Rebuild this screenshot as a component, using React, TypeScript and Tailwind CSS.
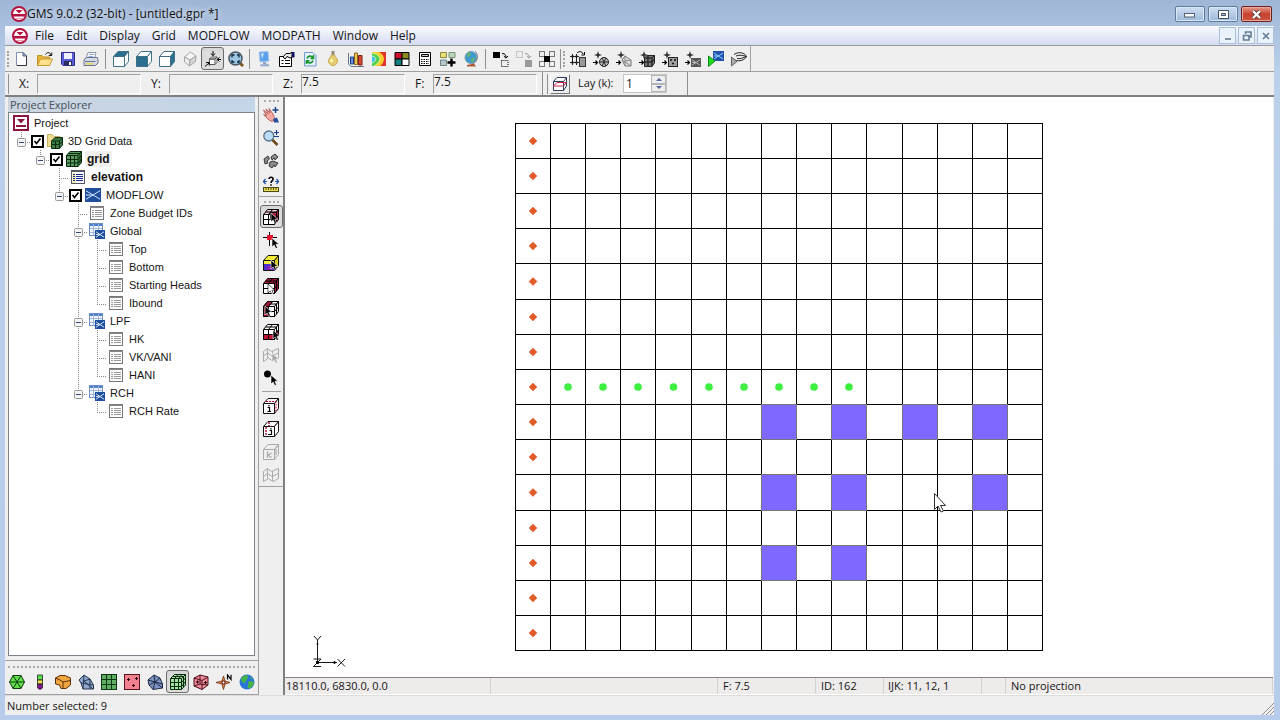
import React, { useState } from 'react';

interface IconProps {
  children: React.ReactNode;
  size?: number;
}

const Svg: React.FC<IconProps> = ({ children, size = 16 }) => (
  <svg width={size} height={size} viewBox="0 0 16 16" fill="none" className="shrink-0" aria-hidden="true">
    {children}
  </svg>
);

/* ---------- shared shapes ---------- */

const Cube = ({ top = '#fff', front = '#fff', side = '#fff', line = '#3f7189' }) => (
  <g stroke={line} strokeLinejoin="round">
    <path d="M.5 5.500L5 .5H15.500L11.500 5.500Z" fill={top} />
    <path d="M.5 5.500H11.500V15.500H.5Z" fill={front} />
    <path d="M11.500 5.500L15.500 .5V10.500L11.500 15.500Z" fill={side} />
  </g>
);

const GridCube = ({ front = '#fff', top = '#fff', side = '#fff', line = '#000' }) => (
  <g stroke={line}>
    <path d="M.5 5.500L4.500 .5H15.500L11.500 5.500Z" fill={top} />
    <path d="M.5 5.500H11.500V15.500H.5Z" fill={front} />
    <path d="M11.500 5.500L15.500 .5V10.500L11.500 15.500Z" fill={side} />
    <path d="M5.500 5.500V15.500M.5 10.500H11.500M11.500 10.500L15.500 6M5.500 5.500L9.500 .5M2.500 3H13.500V13" />
  </g>
);

const Pointer = ({ x = 7, y = 5, fill = '#000', line = '#fff' }) => (
  <path
    d={`M${x} ${y}v9l2.200-2 1.600 3.500 1.700-.8-1.600-3.400h3z`}
    fill={fill}
    stroke={line}
    strokeWidth=".6"
  />
);

const Sparkle = () => (
  <g>
    <path d="M5 0L6 3L9 4L6 5L5 8L4 5L1 4L4 3Z" fill="#333" />
    <path d="M0 11.500H4M2.500 9.500L4.500 11.500L2.500 13.500" stroke="#000" strokeWidth="1.200" />
  </g>
);

const Flow = ({ x = 0, y = 0, w = 16, h = 16, bg = '#1f4e9c', fg = '#cfe3ff' }) => (
  <g>
    <rect x={x} y={y} width={w} height={h} fill={bg} />
    <path
      d={`M${x + 1} ${y + h * 0.2}L${x + w * 0.5} ${y + h * 0.5}L${x + w - 1} ${y + h * 0.2}M${x + 1} ${y + h * 0.5}H${x + w * 0.5}M${x + 1} ${y + h * 0.8}L${x + w * 0.5} ${y + h * 0.5}L${x + w - 1} ${y + h * 0.8}`}
      stroke={fg}
    />
  </g>
);

const Logo = ({ size = 16 }) => (
  <Svg size={size}>
    <circle cx="8" cy="8" r="7" fill="#fff" stroke="#b3123f" strokeWidth="2" />
    <path d="M2 8H14V10.500H2Z" fill="#b3123f" />
    <path d="M4.500 4H11.500L8 7.600Z" fill="#b3123f" />
    <path d="M3.500 12.500H12.500" stroke="#e8a0b4" />
  </Svg>
);

/* ---------- icons ---------- */

const icons: Record<string, React.ReactNode> = {
  new: (
    <g>
      <path d="M2.500 1.500H9L12.500 5V14.500H2.500Z" fill="#fdfdff" stroke="#7f90b5" />
      <path d="M9 1.500V5H12.500Z" fill="#b9c8e6" stroke="#4f5f86" />
      <path d="M12.500 5V14.500H3" stroke="#334" />
    </g>
  ),
  open: (
    <g>
      <path d="M.5 4.500H5L6.500 6H12.500V14.500H.5Z" fill="#e8b53c" stroke="#c08f25" />
      <path d="M3.500 8H15.500L12.500 14.500H.5Z" fill="#ffe08a" stroke="#c99a30" />
      <path d="M8.500 3.500C10 .8 13 1 14 4M14.800 1.500V4.500H11.800" stroke="#111" />
    </g>
  ),
  save: (
    <g>
      <path d="M1.500 1.500H14.500V14.500H3L1.500 13Z" fill="#5a5bd0" stroke="#30308c" />
      <rect x="4" y="2" width="8" height="6" fill="#eef0ff" />
      <rect x="4" y="10" width="8" height="4.500" fill="#2b2b66" />
      <rect x="9" y="11" width="2" height="3" fill="#fff" />
    </g>
  ),
  print: (
    <g>
      <path d="M5 1.500H13L11.500 7.500H3Z" fill="#fff" stroke="#8a93a8" />
      <path d="M1 8.500L3.500 6.500H14.500L15 9V12L12.500 14.500H1Z" fill="#d3d8e6" stroke="#6b7390" />
      <path d="M2 10.500H12.500" stroke="#6b7390" />
      <path d="M3 12.800H10" stroke="#e8d84a" strokeWidth="1.500" />
      <path d="M6 3.500H11M5.500 5.500H10" stroke="#8ea7d8" />
    </g>
  ),
  top: <Cube top="#2b6f8e" />,
  front: <Cube front="#2b6f8e" />,
  side: <Cube side="#2b6f8e" />,
  oblique: (
    <g stroke="#a5a5a5" fill="#f7f7f7">
      <path d="M8.500 1L14 5L8 9L2.500 6Z" />
      <path d="M2.500 6L8 9L7.500 15L2.500 11Z" fill="#ececec" />
      <path d="M14 5L13.500 10.500L7.500 15L8 9Z" fill="#d5d5d5" />
    </g>
  ),
  frame: (
    <g stroke="#000">
      <path d="M4.500 8L6.500 6H12L10 8ZM4.500 8H10V13.500H4.500ZM10 8L12 6V11.500L10 13.500" fill="#fff" stroke="#555" />
      <path d="M8 0V4M6 2.500L8 4.800L10 2.500M16 8.500H12.500M14.500 6.500L12.300 8.500L14.500 10.500M0 15.500L4 12M1 11.500H4.200V14.500" />
    </g>
  ),
  zoomExtents: (
    <g>
      <path d="M11.500 11.500L15 15" stroke="#7a5a20" strokeWidth="3" />
      <circle cx="7.500" cy="7.500" r="6.500" fill="#9cc6e4" stroke="#4a5a64" strokeWidth="1.500" />
      <path d="M4 6.500V4H6.500M9 4H11V6.500M11 9V11H9M6.500 11H4V9" stroke="#102838" strokeWidth="1.300" />
    </g>
  ),
  monitor: (
    <g>
      <path d="M3 1L12 .5L13 10L4 11Z" fill="#5aa0e8" stroke="#a9c7e8" />
      <path d="M5 2.500L8 2.300L6 8Z" fill="#c9e6ff" />
      <path d="M7 11H10V13H7Z" fill="#89a5c8" />
      <path d="M4 14L12 13L13 15H5Z" fill="#9db2cf" stroke="#8aa0c0" strokeWidth=".6" />
    </g>
  ),
  properties: (
    <g>
      <path d="M.5 5.500H12.500V15.500H.5Z" fill="#fff" stroke="#000" />
      <path d="M2.500 9.500H4.500M6 9.500H11M2.500 12.500H4.500M6 12.500H11" stroke="#000" />
      <path d="M4 6L7 2.500H11L13 1V6L11 7L8 5.500L6 8Z" fill="#e8e8e8" stroke="#000" />
      <path d="M13 1H15.500V6.500H13Z" fill="#10106a" />
    </g>
  ),
  refresh: (
    <g>
      <path d="M2.500 1.500H11L14 4.500V15H2.500Z" fill="#e4f2ff" stroke="#6f9bd1" />
      <path d="M5 7.500C6 4.500 9.500 4.500 10.500 6.500M11.500 4V7.500H8.500M11 9.500C10 12.500 6.500 12.500 5.500 10.500M4.500 13V9.800H7.500" stroke="#17952b" strokeWidth="1.600" />
    </g>
  ),
  bulb: (
    <g>
      <rect x="6.500" y="0" width="3" height="5" fill="#8b8b7a" />
      <path d="M6.500 4H9.500C10 6 12.500 7 12.500 10C12.500 12.500 10.500 14.500 8 14.500C5.500 14.500 3.500 12.500 3.500 10C3.500 7 6 6 6.500 4Z" fill="#e6cd72" stroke="#c4a952" />
      <circle cx="6.500" cy="9.500" r="1.600" fill="#fff4bd" />
    </g>
  ),
  chart: (
    <g>
      <path d="M.5 2V13L3 15.500H16" stroke="#678" />
      <path d="M2.500 6H5.500V13H2.500Z" fill="#6d8fe0" stroke="#1e3a86" />
      <path d="M6.500 2H9.500V13.500H6.500Z" fill="#e9c553" stroke="#8a6a18" />
      <path d="M10.500 4.500H14V14H10.500Z" fill="#d94a36" stroke="#7d1d12" />
    </g>
  ),
  contour: (
    <g>
      <rect x="1" y="1" width="14" height="14" fill="#e3342a" />
      <path d="M1 1H8C15 5 14 11 9 15H1Z" fill="#f5cf2d" />
      <path d="M1 2C11 4 11 10 3 15H1Z" fill="#4fd24b" />
      <path d="M1 5C6 6 6 10 1 12Z" fill="#3fc4ec" />
      <path d="M1 2C11 4 11 10 3 15M1 5C6 6 6 10 1 12" stroke="#f6f6c8" strokeWidth=".7" />
    </g>
  ),
  palette: (
    <g stroke="#000">
      <path d="M1 1.500H8V8H1Z" fill="#d01030" />
      <path d="M8 1.500H15V8H8Z" fill="#8c8c1e" />
      <path d="M1 8H8V14.500H1Z" fill="#108080" />
      <path d="M8 8H15V14.500H8Z" fill="#fff" />
    </g>
  ),
  calculator: (
    <g>
      <path d="M2.500 1.500H13.500V14.500H2.500Z" fill="#fff" stroke="#000" />
      <path d="M4.500 3.500H11.500V5.500H4.500Z" fill="#ccc" stroke="#000" />
      <path d="M4 8.500H12M4 10.500H12M4 12.500H12" stroke="#000" strokeDasharray="1.500 1" />
    </g>
  ),
  gridPlus: (
    <g>
      <path d="M.5 1.500H6.500V6.500H.5Z" fill="#eae071" stroke="#8b8643" />
      <path d="M9 1.500H15V6.500H9Z" fill="#bcd8bb" stroke="#779477" />
      <path d="M.5 9H6.500V14.500H.5Z" fill="#b9c8c9" stroke="#6d8080" />
      <path d="M11.500 7.500V15.500M7.500 11.500H15.500" stroke="#000" strokeWidth="2.400" />
    </g>
  ),
  globe: (
    <g>
      <circle cx="8" cy="6.500" r="6" fill="#3e9bd0" stroke="#7d9cb0" />
      <path d="M4 3C7 0 9 3 7 5C6 7 4 6 4 3ZM8 8L12 6L11 10L8.500 11Z" fill="#63b66a" />
      <path d="M12 0C16 4 15 10 10 13" stroke="#888" />
      <path d="M4 14L11 12.500L13 15.500H4Z" fill="#b05a30" />
    </g>
  ),
  moveSelection: (
    <g>
      <rect x="0" y="1" width="7" height="6" fill="#000" />
      <path d="M9 2.500C12 2.500 13 4 13 6.500M10.800 5L13 7.200L15 5" stroke="#000" />
      <rect x="8.500" y="9.500" width="6.500" height="6" stroke="#000" strokeDasharray="1 1" />
    </g>
  ),
  moveSelectionOff: (
    <g>
      <rect x=".5" y=".5" width="6" height="6" stroke="#999" strokeDasharray="1 1" />
      <path d="M9 2.500C12 2.500 13 4 13 6.500M10.800 5L13 7.200L15 5" stroke="#999" />
      <rect x="9" y="9" width="7" height="7" fill="#999" />
    </g>
  ),
  selectAll: (
    <g>
      <path d="M.5 .5H5.500V5.500H.5ZM10.500 .5H15.500V5.500H10.500ZM.5 10.500H5.500V15.500H.5ZM10.500 10.500H15.500V15.500H10.500Z" stroke="#000" strokeDasharray="1 1" />
      <rect x="5" y="5" width="6" height="6" fill="#000" />
    </g>
  ),
  mapTo: (
    <g>
      <path d="M2.500 3V14M6.500 3V14M0 5.500H9M0 11.500H9" stroke="#222" />
      <path d="M1.500 4.500H3.500V6.500H1.500ZM5.500 4.500H7.500V6.500H5.500ZM1.500 10.500H3.500V12.500H1.500ZM5.500 10.500H7.500V12.500H5.500Z" fill="#222" />
      <path d="M7 2C9 0 12 0 13 3M14.500 1V4H11.500" stroke="#000" />
      <rect x="9.500" y="6.500" width="6" height="9" fill="#999" stroke="#333" />
    </g>
  ),
  to2d: (
    <g>
      <Sparkle />
      <circle cx="11" cy="11" r="4.500" fill="#bbb" stroke="#222" />
      <path d="M6.500 11H15.500M9 7L13 15M13 7L9 15" stroke="#222" />
    </g>
  ),
  toTin: (
    <g>
      <Sparkle />
      <path d="M6 9L9 5L15 9V15H9Z" fill="#ddd" stroke="#777" />
      <path d="M9 5V15M6 9L15 15M9 10L15 9" stroke="#888" />
    </g>
  ),
  toGrid3d: (
    <g>
      <Sparkle />
      <path d="M5.500 7L8 4.500H15.500V12L13 15.500H5.500Z" fill="#777" stroke="#222" />
      <path d="M5.500 7H13V15.500M13 7L15.500 4.500M9 5V15M5.500 11H13L15.500 8" stroke="#111" />
    </g>
  ),
  toScatter: (
    <g>
      <Sparkle />
      <rect x="6.500" y="6.500" width="9" height="9" fill="#9d9d9d" stroke="#222" />
      <path d="M8 9H10M12 9H14M10 12.500H12" stroke="#111" strokeWidth="1.500" />
    </g>
  ),
  toModflow: (
    <g>
      <Sparkle />
      <Flow x={6} y={7} w={10} h={9} bg="#555" fg="#bbb" />
    </g>
  ),
  runModflow: (
    <g>
      <Flow x={5} y={0} w={11} h={10} bg="#2052ad" fg="#8fd0ff" />
      <path d="M.5 5L7 10L.5 15.500Z" fill="#1fe01f" stroke="#0c8a16" />
    </g>
  ),
  runModpath: (
    <g>
      <path d="M3 3.500C8 0 14 2 15.500 5.500C14 9 8 11 4 9M5 5C9 3.500 12 4.500 15.500 5.500C12 7 9 8 6 7.500" stroke="#222" />
      <path d="M.5 6L6 10.500L.5 15Z" fill="#aaa" stroke="#666" />
    </g>
  ),
  layers: (
    <g stroke="#2b3f5c">
      <path d="M1.500 5.500L5 1.500H14.500V10L11.500 14.500H1.500Z" fill="#fff" />
      <path d="M1.500 5.500H11.500V14.500M11.500 5.500L14.500 1.500" />
      <path d="M1.500 10L5 6.500H14.500L11.500 10Z" stroke="#d02848" />
    </g>
  ),
  /* side tools */
  pan: (
    <g>
      <path d="M.5 3L5 7L3 2L7 6L6 1.500L10 7L11 9.500L12.500 12L9 14.500C5 13 3 10 .5 7.500L3.500 9Z" fill="#f5a9a0" stroke="#b8625a" />
      <path d="M10 12L14 10.500L16 15.500H11Z" fill="#2a4f9c" />
      <path d="M12.500 0V6M9.500 3H15.500" stroke="#1c3f8c" strokeWidth="1.500" />
    </g>
  ),
  zoom: (
    <g>
      <path d="M9 9.500L14.500 15" stroke="#6b4a20" strokeWidth="2.500" />
      <circle cx="5.800" cy="6" r="5" fill="#b7dcf3" stroke="#5b7488" strokeWidth="1.300" />
      <path d="M13.500 0V5M11 2.500H16M11 6.500H16" stroke="#1c3f8c" strokeWidth="1.200" />
    </g>
  ),
  rotate: (
    <g stroke="#3a3a3a" fill="#8a8a8a">
      <path d="M1 6L5 3L6.500 6L4 8L5 10L2 11Z" />
      <path d="M8 4L12 1L15 4L12 7L11 5L9 7Z" />
      <path d="M7 9L10 8L15 10L12 14L11 12L9 15L6 13Z" />
    </g>
  ),
  measure: (
    <g>
      <path d="M0 5.500H4M2.500 3L.3 5.500L2.500 8M16 5.500H12M13.500 3L15.700 5.500L13.500 8" stroke="#1c4fa0" strokeWidth="1.200" />
      <path d="M6 3C6 .5 10.500 .5 10 3.500C9.800 5 8 5 8 7M8 8.300V9.800" stroke="#000" strokeWidth="1.600" />
      <rect x=".5" y="11.500" width="15" height="4" fill="#e9e04c" stroke="#4c4a14" />
      <path d="M3 12V14M5.500 12V14M8 12V14M10.500 12V14M13 12V14" stroke="#4c4a14" />
    </g>
  ),
  selCells: (
    <g>
      <GridCube top="#f1c4cf" side="#a01838" />
      <path d="M7.500 3.500H13.500V9.500H7.500Z" fill="#b02040" stroke="#000" />
      <Pointer x={8} y={4} />
    </g>
  ),
  selNode: (
    <g>
      <path d="M6.500 0V14M0 5.500H14" stroke="#000" />
      <rect x="4" y="3" width="6" height="5" fill="#e0142c" />
      <Pointer x={9} y={6} />
    </g>
  ),
  selMaterial: (
    <g>
      <Cube top="#f4ee3a" front="#4b2fd0" side="#d9c920" line="#111" />
      <rect x="1" y="6" width="10" height="3" fill="#f4ee3a" />
      <rect x="4" y="11" width="6" height="4" fill="#8a1fb0" />
      <Pointer x={8} y={5} />
    </g>
  ),
  selI: (
    <g>
      <GridCube top="#a01838" side="#a01838" />
      <Pointer x={5} y={6} fill="#fff" line="#000" />
    </g>
  ),
  selJ: (
    <g>
      <GridCube side="#e8e8e8" />
      <path d="M.5 5.500H5.500V15.500H.5ZM.5 5.500L4.500 .5H9.500L5.500 5.500Z" fill="#a01838" stroke="#000" />
      <Pointer x={2} y={5} />
    </g>
  ),
  selK: (
    <g>
      <GridCube />
      <path d="M.5 10.500H11.500V15.500H.5ZM11.500 10.500L15.500 6V10.500L11.500 15.500ZM5.500 10.500V15.500" fill="#c01538" stroke="#000" />
      <Pointer x={10} y={6} />
    </g>
  ),
  selSectionOff: (
    <g stroke="#a9a9a9">
      <path d="M.5 4.500L4.500 1.500L8.500 4.500L15.500 1.500V11L9.500 14L5.500 11L.5 14.500ZM.5 9L4.500 6L9 9L15 6M4.500 2V11M9.500 4V14" />
      <Pointer x={9} y={6} fill="#a9a9a9" line="#f0f0f0" />
    </g>
  ),
  addNode: (
    <g>
      <circle cx="4.500" cy="4" r="3.500" fill="#000" />
      <Pointer x={8} y={5} />
    </g>
  ),
  viewI: (
    <g>
      <Cube line="#111" />
      <path d="M3 3.500H13V13" stroke="#c01538" strokeDasharray="2 1" />
      <path d="M6 7V8.500M4.500 9.500H6.500V13.500M4.500 13.500H8" stroke="#000" strokeWidth="1.200" />
    </g>
  ),
  viewJ: (
    <g>
      <Cube line="#111" />
      <path d="M3 6V15M6 1V5" stroke="#c01538" strokeWidth="1.500" strokeDasharray="2 1" />
      <path d="M8 7V8.500M6.500 9.500H8.500V13.500H5" stroke="#000" strokeWidth="1.200" />
    </g>
  ),
  viewKOff: (
    <g>
      <Cube line="#a9a9a9" top="none" front="none" side="none" />
      <path d="M4.500 7.500V14M8.500 9L5 11L8.500 13.500M13 5V11" stroke="#a9a9a9" strokeWidth="1.200" />
    </g>
  ),
  viewSectionOff: (
    <path d="M.5 4.500L4.500 1.500L8.500 4.500L15.500 1.500V11.500L10 14.500L5.500 11.500L.5 14.500ZM.5 9.500L4.500 6.500L9 9.500L15.500 6.500M4.500 2V11M9.500 4V14" stroke="#a9a9a9" />
  ),
  /* module bar */
  tin: (
    <g stroke="#103c10">
      <path d="M4 1.500H12L15.500 8L12 14.500H4L.5 8Z" fill="#5fe04a" />
      <path d="M4 1.500L12 14.500M12 1.500L4 14.500M.5 8H15.500" />
    </g>
  ),
  borehole: (
    <g stroke="#222" strokeWidth=".8">
      <path d="M5.500 1H10.500V6H5.500Z" fill="#5be04e" />
      <path d="M5.500 6H10.500V10H5.500Z" fill="#f0e04a" />
      <path d="M5.500 10H10.500V14L8 15.500L5.500 14Z" fill="#801090" />
    </g>
  ),
  solid: (
    <g stroke="#5a3208">
      <path d="M.5 4L5 1.500H10L15.500 4V11L11 14.500H6L4.500 11L.5 10Z" fill="#f0a540" />
      <path d="M.5 4L5 6L8 8L15.500 6.500M8 8V14.500" />
    </g>
  ),
  mesh2d: (
    <g stroke="#26374f">
      <path d="M1 6L6 1L12 5L15.500 11V15H5L3 9Z" fill="#8fa7cc" />
      <path d="M6 1L5 15M6 7L12 5V15M3 9L15 11M6 7L15 15" />
    </g>
  ),
  grid2d: (
    <g stroke="#0f3514">
      <rect x=".5" y=".5" width="15" height="15" fill="#5fae62" />
      <path d="M5.500 .5V15.500M10.500 .5V15.500M.5 5.500H15.500M.5 10.500H15.500" />
    </g>
  ),
  scatter2d: (
    <g>
      <rect x=".5" y=".5" width="15" height="15" fill="#f2808e" stroke="#5b1622" />
      <path d="M3 5.500H6M4.500 4V7M11 4.500H14M12.500 3V6M8 11.500H11M9.500 10V13" stroke="#2c0810" />
    </g>
  ),
  mesh3d: (
    <g stroke="#1d2a44">
      <path d="M1 6L7 1L13 4L15.500 10V14L6 15.500L2 11Z" fill="#7c92c2" />
      <path d="M1 6L8 8L13 4M8 8L6 15.500M8 8L15.500 14M7 1L8 8M2 11L8 8L15.500 10" />
    </g>
  ),
  grid3d: (
    <g stroke="#062b0a">
      <path d="M.5 4.500L4.500 .5H15.500V11L11.500 15.500H.5Z" fill="#a5e0a5" />
      <path d="M.5 4.500H11.500V15.500M11.500 4.500L15.500 .5M4.500 4.500V15.500M8.500 4.500V15.500M.5 8.500H11.500L15.500 4M.5 12.500H11.500L15.500 7.500M4.500 4.500L8 .5M8.500 4.500L12 .5M2.500 2.500H13.500V13" />
    </g>
  ),
  scatter3d: (
    <g>
      <path d="M1 4L7 1L15 3V11L9 15.500L1 12Z" fill="#f08a9a" stroke="#4c101c" />
      <path d="M1 4L9 6.500L15 3M9 6.500V15.500M7 1V10M1 12L7 10L15 11" stroke="#4c101c" />
      <path d="M3 8H6M4.500 6.500V9.500M11 8.500H14M12.500 7V10" stroke="#200" />
    </g>
  ),
  map: (
    <g>
      <path d="M7.500 2L9 7L14 8.500L9 10L7.500 15.500L6 10L0 8.500L6 7Z" fill="#ef8a4a" stroke="#6a2a10" strokeWidth=".8" />
      <circle cx="7.500" cy="8.500" r="1.500" fill="#fff" stroke="#400" />
      <path d="M11.500 5.500V.8L15 5.500V.8" stroke="#000" strokeWidth="1.200" />
    </g>
  ),
  gis: (
    <g>
      <circle cx="8" cy="8" r="7.500" fill="#2c74d8" />
      <path d="M2 5C4 1 8 .5 9 2C9 5 7 6 6 9C4 9 2 8 2 5ZM9 8C12 6 15 7 15 9C14 13 11 15 9 14C8 12 10 11 9 8ZM11 2L14 5L12 5Z" fill="#43b34a" />
    </g>
  ),
  /* tree */
  project: (
    <g>
      <rect x="1" y="1" width="14" height="14" fill="#fff" stroke="#8c1440" strokeWidth="2" />
      <path d="M4 4H12L8 8.500Z" fill="#8c1440" />
      <path d="M3 11H13" stroke="#8c1440" strokeWidth="2" />
    </g>
  ),
  gridFolder: (
    <g>
      <path d="M.5 1.500H5L7 3.500H13V13.500H.5Z" fill="#f0dc90" stroke="#c8ae58" />
      <path d="M4.500 8L8 4.500H15.500V12L12.500 15.500H4.500Z" fill="#3b7a42" stroke="#0c2e10" />
      <path d="M4.500 8H12.500V15.500M12.500 8L15.500 4.500M8.500 8V15.500M4.500 11.500H12.500L15.500 8.500" stroke="#0c2e10" />
    </g>
  ),
  gridTree: (
    <g stroke="#06250a">
      <path d="M.5 4.500L4 .5H15.500V11.500L12 15.500H.5Z" fill="#5b9c60" />
      <path d="M.5 4.500H12V15.500M12 4.500L15.500 .5M4.500 4.500V15.500M8.500 4.500V15.500M.5 8.500H12L15.500 4.500M.5 12H12L15.500 8M2.500 2.500H14V13" />
    </g>
  ),
  dataset: (
    <g>
      <rect x="1.500" y="1.500" width="13" height="13" fill="#fff" stroke="#777" />
      <path d="M1 2.500H15" stroke="#888" />
      <path d="M3 5.500H5M6 5.500H13M3 7.500H5M6 7.500H13M3 9.500H5M6 9.500H13M3 11.500H5M6 11.500H13" stroke="#999" />
    </g>
  ),
  datasetActive: (
    <g>
      <rect x="1.500" y="1.500" width="13" height="13" fill="#fff" stroke="#556" />
      <path d="M1 2.500H15" stroke="#556" />
      <path d="M4 4V14" stroke="#ece79a" strokeWidth="3" />
      <path d="M3 5.500H5M6 5.500H13M3 7.500H5M6 7.500H13M3 9.500H5M6 9.500H13M3 11.500H5M6 11.500H13" stroke="#1b2a9c" />
    </g>
  ),
  modflow: <Flow y={1} h={14} />,
  package: (
    <g>
      <rect x=".5" y=".5" width="13" height="12" fill="#f2f8ff" stroke="#6d8fc8" />
      <path d="M1 2H13" stroke="#4f7fd0" strokeWidth="2" />
      <path d="M4.500 1V12.500M9.500 1V12.500M1 5.500H13M1 9.500H13" stroke="#9db7e0" />
      <Flow x={6} y={7} w={10} h={9} />
    </g>
  ),
};

/* ---------- toolbar parts ---------- */

interface ToolButtonProps {
  icon: string;
  label: string;
  pressed?: boolean;
}

const ToolButton: React.FC<ToolButtonProps> = ({ icon, label, pressed }) => (
  <button
    aria-label={label}
    className={`flex h-[23px] w-[23px] shrink-0 items-center justify-center rounded-[3px] border ${
      pressed ? 'border-[#6b6b6b] bg-[#dedede] shadow-inner' : 'border-transparent hover:border-[#a9a9a9]'
    }`}
  >
    <Svg>{icons[icon]}</Svg>
  </button>
);

const Separator = ({ tight = false }) => (
  <div className={`h-5 w-px shrink-0 bg-[#8f8f8f] ${tight ? 'mx-[2px]' : 'mx-[3px]'}`} />
);

const Grip = () => (
  <div className="h-4 w-[3px] shrink-0 border-l-2 border-dotted border-[#a3a3a3]" />
);

const fileTools = ['new', 'open', 'save', 'print'];
const cameraTools = ['top', 'front', 'side', 'oblique', 'frame', 'zoomExtents'];
const displayTools = ['monitor', 'properties', 'refresh', 'bulb', 'chart', 'contour', 'palette', 'calculator', 'gridPlus', 'globe'];
const visibilityTools = ['moveSelection', 'moveSelectionOff', 'selectAll'];
const modelTools = ['mapTo', 'to2d', 'toTin', 'toGrid3d', 'toScatter', 'toModflow', 'runModflow', 'runModpath'];
const viewTools = ['pan', 'zoom', 'rotate', 'measure'];
const selectTools = ['selCells', 'selNode', 'selMaterial', 'selI', 'selJ', 'selK', 'selSectionOff', 'addNode'];
const sliceTools = ['viewI', 'viewJ', 'viewKOff', 'viewSectionOff'];
const modules = ['tin', 'borehole', 'solid', 'mesh2d', 'grid2d', 'scatter2d', 'mesh3d', 'grid3d', 'scatter3d', 'map', 'gis'];
const menus = ['File', 'Edit', 'Display', 'Grid', 'MODFLOW', 'MODPATH', 'Window', 'Help'];

const ToolGroup = ({ tools, pressed }: { tools: string[]; pressed?: string }) => (
  <>
    {tools.map((icon) => (
      <ToolButton key={icon} icon={icon} label={icon} pressed={icon === pressed} />
    ))}
  </>
);

const TitleBar = () => (
  <header className="flex h-[26px] shrink-0 items-center pl-[6px] pr-[2px] pt-[2px]">
    <Logo />
    <h1 className="flex-1 text-[12px] text-[#111] [text-shadow:0_0_6px_#fff]">GMS 9.0.2 (32-bit) - [untitled.gpr *]</h1>
    <div className="flex gap-[3px]">
      <button aria-label="Minimize" className="flex h-4 w-[30px] items-center justify-center rounded-[2px] border border-[#5f7b9f] bg-linear-to-b from-[#cfdff1] to-[#9db9da] shadow-[inset_0_0_0_1px_#dbe8f6]">
        <svg width="12" height="8"><rect x=".5" y="3.500" width="10" height="3.500" fill="#fff" stroke="#555f70" /></svg>
      </button>
      <button aria-label="Maximize" className="flex h-4 w-[30px] items-center justify-center rounded-[2px] border border-[#5f7b9f] bg-linear-to-b from-[#cfdff1] to-[#9db9da] shadow-[inset_0_0_0_1px_#dbe8f6]">
        <svg width="11" height="9"><path d="M.5 .5H10.500V8.500H.5ZM3.500 3.500H7.500V5.500H3.500Z" fill="#fff" stroke="#454f60" fillRule="evenodd" /></svg>
      </button>
      <button aria-label="Close" className="flex h-4 w-[31px] items-center justify-center rounded-[2px] border border-[#6d2020] bg-linear-to-b from-[#e39a8c] via-[#c8402f] to-[#c95640] shadow-[inset_0_0_0_1px_#e8a89c]">
        <svg width="11" height="9" fill="none">
          <path d="M2 1L9 8M9 1L2 8" stroke="#5b3a3a" strokeWidth="4" />
          <path d="M2 1L9 8M9 1L2 8" stroke="#fff" strokeWidth="2.400" />
        </svg>
      </button>
    </div>
  </header>
);

const mdiButtons = [
  { label: 'Minimize document', d: 'M2 8H8' },
  { label: 'Restore document', d: 'M3.500 3V1H9V6H7M1.500 4.500H7V9H1.500Z' },
  { label: 'Close document', d: 'M2 2L8 8M8 2L2 8' },
];

const MenuBar = () => (
  <nav className="flex h-[20px] shrink-0 items-center border-b border-[#9a9a9a] bg-linear-to-b from-[#fafbff] to-[#d5dbf0] pl-[7px]">
    <Logo />
    <div className="flex flex-1 pl-px">
      {menus.map((menu) => (
        <button key={menu} className="px-[6px] text-[12px] leading-4">{menu}</button>
      ))}
    </div>
    <div className="flex gap-[2px]">
      {mdiButtons.map((btn) => (
        <button key={btn.label} aria-label={btn.label} className="flex h-[17px] w-[17px] items-center justify-center border border-[#a9c1d8] bg-[#e9f2fb]">
          <svg width="10" height="10" fill="none"><path d={btn.d} stroke="#667b91" strokeWidth="1.600" /></svg>
        </button>
      ))}
    </div>
  </nav>
);

const CoordField = ({ label, value = '' }: { label: string; value?: string }) => {
  const [text, setText] = useState(value);
  const id = `coord-${label}`;
  return (
    <div className="flex h-full items-center">
      <label htmlFor={id} className="w-7 pl-[10px] text-[12px]">{label}:</label>
      <input
        id={id}
        value={text}
        onChange={(e) => setText(e.target.value)}
        className="h-5 w-[104px] border border-b-white border-l-[#a0a0a0] border-r-white border-t-[#a0a0a0] bg-transparent pb-1 text-[12px] leading-4 outline-none"
      />
    </div>
  );
};

const CoordBar = () => {
  const [layer, setLayer] = useState(1);
  return (
    <div className="flex h-[25px] shrink-0 items-center border-b-2 border-[#808080]">
      <div className="ml-[2px] h-5 w-[2px] border-r border-[#909090]" />
      <CoordField label="X" />
      <CoordField label="Y" />
      <CoordField label="Z" value="7.5" />
      <CoordField label="F" value="7.5" />
      <div className="ml-[5px] h-full w-px bg-[#8f8f8f]" />
      <div className="mx-[2px] h-5 w-[3px] border-r border-[#909090]" />
      <button aria-label="Single layer" className="flex h-5 w-5 items-center justify-center border border-[#777] border-l-white border-t-white">
        <Svg>{icons.layers}</Svg>
      </button>
      <label htmlFor="layer" className="ml-2 w-[45px] text-[11px] whitespace-nowrap">Lay (k):</label>
      <div className="flex h-[19px] w-[44px] border border-[#c5c5c5] bg-white">
        <input
          id="layer"
          value={layer}
          onChange={(e) => setLayer(Number(e.target.value) || 1)}
          className="w-[27px] bg-white pl-[2px] text-[12px] leading-4 outline-none"
        />
        <div className="flex flex-1 flex-col">
          <button aria-label="Layer up" onClick={() => setLayer(layer + 1)} className="flex flex-1 items-center justify-center border border-[#b5b5b5] bg-[#eee]">
            <svg width="6" height="3"><path d="M0 3L3 0L6 3Z" fill="#5866a0" /></svg>
          </button>
          <button aria-label="Layer down" onClick={() => setLayer(Math.max(1, layer - 1))} className="flex flex-1 items-center justify-center border border-[#b5b5b5] bg-[#eee]">
            <svg width="6" height="3"><path d="M0 0L3 3L6 0Z" fill="#5866a0" /></svg>
          </button>
        </div>
      </div>
      <div className="ml-5 h-full w-px bg-[#8f8f8f]" />
    </div>
  );
};

/* ---------- project tree ---------- */

interface TreeRow {
  // one letter per indent column: . empty, | line, T branch, L last branch
  lines: string;
  icon: string;
  label: string;
  open?: boolean;
  checked?: boolean;
  bold?: boolean;
  selected?: boolean;
}

const rows: TreeRow[] = [
  { lines: '', icon: 'project', label: 'Project' },
  { lines: 'L', icon: 'gridFolder', label: '3D Grid Data', open: true, checked: true },
  { lines: '.L', icon: 'gridTree', label: 'grid', open: true, checked: true, bold: true, selected: true },
  { lines: '..T', icon: 'datasetActive', label: 'elevation', bold: true },
  { lines: '..L', icon: 'modflow', label: 'MODFLOW', open: true, checked: true },
  { lines: '...T', icon: 'dataset', label: 'Zone Budget IDs' },
  { lines: '...T', icon: 'package', label: 'Global', open: true },
  { lines: '...|T', icon: 'dataset', label: 'Top' },
  { lines: '...|T', icon: 'dataset', label: 'Bottom' },
  { lines: '...|T', icon: 'dataset', label: 'Starting Heads' },
  { lines: '...|L', icon: 'dataset', label: 'Ibound' },
  { lines: '...T', icon: 'package', label: 'LPF', open: true },
  { lines: '...|T', icon: 'dataset', label: 'HK' },
  { lines: '...|T', icon: 'dataset', label: 'VK/VANI' },
  { lines: '...|L', icon: 'dataset', label: 'HANI' },
  { lines: '...L', icon: 'package', label: 'RCH', open: true },
  { lines: '....L', icon: 'dataset', label: 'RCH Rate' },
];

const TreeColumn = ({ kind, open }: { kind: string; open?: boolean }) => (
  <svg width="19" height="18" fill="none" className="shrink-0" aria-hidden="true">
    {kind !== '.' && <path d={kind === 'L' ? 'M9.500 0V10' : 'M9.500 0V18'} stroke="#888" strokeDasharray="1 1" />}
    {(kind === 'T' || kind === 'L') && <path d="M9 10.500H19" stroke="#888" strokeDasharray="1 1" />}
    {open && (
      <g>
        <rect x="5.500" y="6.500" width="8" height="8" rx="1" fill="#f4f4f4" stroke="#999" />
        <path d="M7 10.500H12" stroke="#35487a" />
      </g>
    )}
  </svg>
);

const TreeItem: React.FC<{ row: TreeRow }> = ({ row }) => {
  const [checked, setChecked] = useState(!!row.checked);
  const last = row.lines.length - 1;
  return (
    <li className="flex h-[18px] items-center">
      {row.lines.split('').map((kind, idx) => (
        <TreeColumn key={idx} kind={kind} open={row.open && idx === last} />
      ))}
      {row.checked !== undefined && (
        <span className="relative mr-px flex h-[13px] w-[14px] shrink-0">
          <input
            type="checkbox"
            aria-label={row.label}
            checked={checked}
            onChange={(e) => setChecked(e.target.checked)}
            className="h-[13px] w-[13px] appearance-none border-2 border-black bg-white"
          />
          {checked && (
            <svg width="13" height="13" fill="none" className="pointer-events-none absolute inset-0">
              <path d="M3.500 6L5.500 8.500L9.500 3.500" stroke="#000" strokeWidth="1.600" />
            </svg>
          )}
        </span>
      )}
      <span className="mx-px flex shrink-0"><Svg>{icons[row.icon]}</Svg></span>
      <span className={`ml-[2px] px-[2px] leading-4 whitespace-nowrap ${row.bold ? 'font-bold text-[12px]' : 'text-[11px]'} ${row.selected ? 'bg-[#f0f0ee]' : ''}`}>
        {row.label}
      </span>
    </li>
  );
};

const ProjectExplorer = () => (
  <section className="flex min-h-0 flex-1 flex-col border-r border-[#a0a0a0] px-[3px] pb-1">
    <h2 className="h-[15px] shrink-0 bg-linear-to-r from-[#ccd5df] to-[#c3d5e8] pl-[2px] text-[11px] leading-[15px] text-[#44505c]">Project Explorer</h2>
    <ul className="min-h-0 flex-1 border border-[#7d828a] bg-white pl-[3px] pt-px font-['Liberation_Sans',Arial,sans-serif]">
      {rows.map((row, idx) => (
        <TreeItem key={idx} row={row} />
      ))}
    </ul>
  </section>
);

const DotRow = ({ className = '' }) => <div className={`shrink-0 border-t-2 border-dotted border-[#aaa] ${className}`} />;

const SideTools = () => (
  <aside className="flex w-[26px] shrink-0 flex-col items-center border-r-2 border-[#808080]">
    <DotRow className="mb-px mt-[3px] w-[15px]" />
    <ToolGroup tools={viewTools} />
    <div className="mt-px w-full border-t border-[#a0a0a0]" />
    <DotRow className="mb-[2px] mt-1 w-[15px]" />
    <ToolGroup tools={selectTools} pressed="selCells" />
    <div className="my-[2px] w-[19px] border-t border-[#a0a0a0]" />
    <ToolGroup tools={sliceTools} />
    <div className="w-full border-t border-[#a0a0a0]" />
  </aside>
);

/* ---------- model view ---------- */

const edges = [0, 35, 70, 105, 140, 176, 211, 246, 281, 316, 351, 387, 422, 457, 492, 527];
const rechargeCells = [
  [7, 8], [9, 8], [11, 8], [13, 8],
  [7, 10], [9, 10], [13, 10],
  [7, 12], [9, 12],
];
const drainCols = [1, 2, 3, 4, 5, 6, 7, 8, 9];
const mid = (i: number) => (edges[i] + edges[i + 1]) / 2 + 0.5;

const ModelGrid = () => (
  <svg width="528" height="528" fill="none" className="shrink-0" role="img" aria-label="Model grid">
    {edges.map((e) => (
      <path key={e} d={`M${e + 0.5} 0V528M0 ${e + 0.5}H528`} stroke="#000" />
    ))}
    {rechargeCells.map(([c, r]) => (
      <rect
        key={`${c}-${r}`}
        x={edges[c] + 0.5}
        y={edges[r] + 0.5}
        width={edges[c + 1] - edges[c]}
        height={edges[r + 1] - edges[r]}
        fill="#7d69ff"
        stroke="#77777c"
      />
    ))}
    {edges.slice(0, 15).map((e, i) => (
      <path key={e} d={`M${mid(0)} ${mid(i) - 4}l4 4l-4 4l-4-4z`} fill="#e2592a" stroke="#e2592a" strokeWidth=".5" />
    ))}
    {drainCols.map((c) => (
      <circle key={c} cx={mid(c)} cy={mid(7)} r="3.800" fill="#3df03f" />
    ))}
    <path d="M419.500 370.500v16l3.500-3.500 3 6 2.500-1-3-5.500h5z" fill="#fff" stroke="#333" />
  </svg>
);

const AxisTriad = () => (
  <svg width="36" height="36" fill="none" stroke="#000" className="absolute bottom-[6px] left-[26px]" aria-hidden="true">
    <path d="M3 1L6.500 5L10 1M6.500 5V27.500H26M26.500 24L34 31.500M34 24L26.500 31.500M2.500 24H10L2.500 31.500H10" strokeWidth=".9" />
    <path d="M5.500 26.500H7.500V28.500H5.500ZM6 9.500L6.500 8L7 9.500ZM23 26.500L25 27.500L23 28.500Z" fill="#000" />
  </svg>
);

const ViewStatus = () => (
  <div className="flex h-[18px] shrink-0 items-stretch border-b border-t border-b-white border-t-[#8c8484] bg-[#eeebeb] text-[11px] leading-4 whitespace-nowrap">
    <span className="w-[206px] border-r border-[#d5d0d0] pl-px">18110.0, 6830.0, 0.0</span>
    <span className="w-[227px] border-r border-[#d5d0d0]" />
    <span className="w-[98px] border-r border-[#d5d0d0] pl-[5px]">F: 7.5</span>
    <span className="w-[68px] border-r border-[#d5d0d0] pl-[5px]">ID: 162</span>
    <span className="w-[98px] border-r border-[#d5d0d0] pl-1">IJK: 11, 12, 1</span>
    <span className="w-6 border-r border-[#d5d0d0]" />
    <span className="flex-1 border-r border-[#d5d0d0] pl-[5px]">No projection</span>
  </div>
);

const App: React.FC = () => {
  return (
    <div className="flex h-screen flex-col overflow-hidden bg-linear-to-b from-[#9fb6d6] via-[#bcd0ea] via-10% to-[#b7cceb] pb-[5px] pl-[5px] pr-[6px] font-['Open_Sans','Segoe_UI',sans-serif] text-[#151515]">
      <TitleBar />
      <div className="flex min-h-0 flex-1 flex-col bg-[#f0efef]">
        <MenuBar />
        <div className="flex h-[26px] shrink-0 items-center border-b border-[#a0a0a0] pl-[2px]">
          <Grip />
          <ToolGroup tools={fileTools} />
          <Separator />
          <ToolGroup tools={cameraTools} pressed="frame" />
          <Separator tight />
          <ToolGroup tools={displayTools} />
          <Separator />
          <ToolGroup tools={visibilityTools} />
          <Separator tight />
          <Grip />
          <ToolGroup tools={modelTools} />
          <div className="h-full w-px bg-[#a0a0a0]" />
        </div>
        <CoordBar />
        <main className="flex min-h-0 flex-1">
          <div className="flex w-[254px] shrink-0 flex-col">
            <ProjectExplorer />
            <div className="flex h-[35px] shrink-0 flex-col border-y border-r border-[#a0a0a0]">
              <DotRow className="mx-[3px] mt-[5px]" />
              <div className="flex pt-[2px]">
                <ToolGroup tools={modules} pressed="grid3d" />
              </div>
            </div>
          </div>
          <SideTools />
          <div className="flex min-w-0 flex-1 flex-col pr-px">
            <div className="relative flex min-h-0 flex-1 items-center justify-center bg-white">
              <ModelGrid />
              <AxisTriad />
            </div>
            <ViewStatus />
          </div>
        </main>
        <footer className="flex h-5 shrink-0 items-end justify-between border-t border-[#dcdcdc]">
          <p className="self-center pl-[2px] text-[11px] leading-4">Number selected: 9</p>
          <svg width="13" height="13" stroke="#8d8d8d" aria-hidden="true">
            <path d="M1 13L13 1M5 13L13 5M9 13L13 9" />
          </svg>
        </footer>
      </div>
    </div>
  );
};

export default App;
